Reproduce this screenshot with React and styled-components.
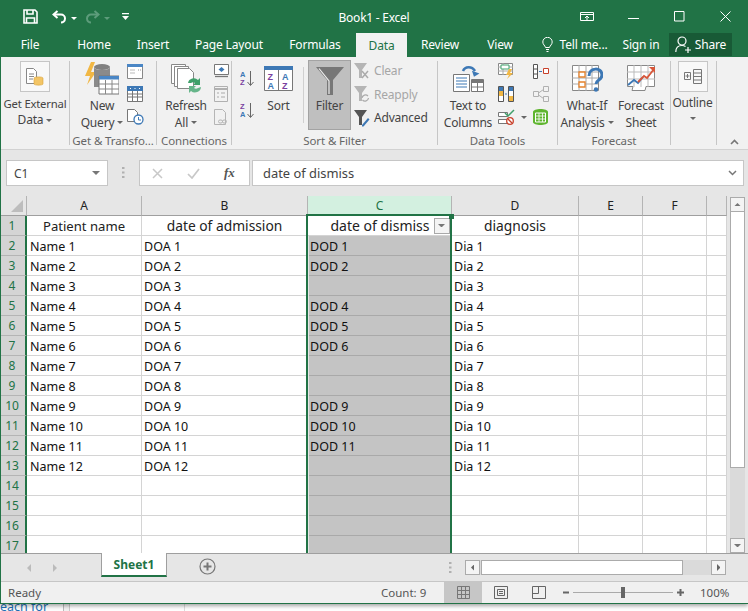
import React from 'react';
import styled, { createGlobalStyle } from 'styled-components';

const Global = createGlobalStyle`
  html, body { margin: 0; padding: 0; background: #fff; }
  #root { width: 748px; height: 611px; overflow: hidden; }
  * { box-sizing: border-box; }
`;
const UI = `"Noto Sans", "Open Sans", sans-serif`;
const GREEN = '#217346';

const Page = styled.div`display:flex;flex-direction:column;width:748px;height:611px;font-family:${UI};background:#fff;overflow:hidden;`;
const Win = styled.div`display:flex;flex-direction:column;height:604px;flex:none;border-left:1px solid ${GREEN};border-bottom:1px solid ${GREEN};box-shadow:0 2px 4px rgba(0,0,0,.35);position:relative;z-index:1;`;

const TitleBar = styled.div`height:33px;flex:none;background:${GREEN};display:grid;grid-template-columns:1fr auto 1fr;align-items:center;color:#fff;margin-left:-1px;`;
const Qat = styled.div`display:flex;align-items:center;padding:0 0 0 23px;height:27px;`;
const Title = styled.div`font-size:12px;letter-spacing:-.25px;padding-top:2px;color:#fff;`;
const WinCtl = styled.div`display:flex;justify-content:flex-end;align-items:center;height:27px;padding-right:17px;`;
const Slot = styled.span`display:block;flex:none;margin-left:${p=>p.$l||0}px;line-height:0;`;

const TabRow = styled.div`height:24px;flex:none;background:${GREEN};display:flex;margin-left:-1px;color:#fff;font-size:12px;`;
const Tab = styled.div`width:${p=>p.$w}px;margin-left:${p=>p.$l||0}px;display:flex;align-items:center;justify-content:center;gap:6px;
  background:${p=>p.$active?'#f1f1f1':'transparent'};color:${p=>p.$active?GREEN:'#fff'};padding-bottom:${p=>p.$active?0:1}px;flex:none;letter-spacing:-.15px;`;
const Share = styled(Tab)`background:#185a36;height:23px;gap:4px;`;

const Ribbon = styled.div`height:93px;flex:none;background:#f1f1f1;border-bottom:1px solid #d2d2d2;display:flex;color:#444;font-size:12px;position:relative;letter-spacing:-.2px;`;
const Group = styled.div`width:${p=>p.$w}px;flex:none;position:relative;display:flex;flex-direction:column;align-items:stretch;padding-top:3px;
  &::after{content:'';position:absolute;right:0;top:4px;bottom:4px;width:1px;background:#c6c6c6;}`;
const GroupBody = styled.div`height:74px;display:flex;align-items:flex-start;padding-left:${p=>p.$l||0}px;`;
const GroupLabel = styled.div`height:14px;line-height:14px;text-align:center;font-size:11.5px;color:#666;padding-right:1px;white-space:nowrap;letter-spacing:-.1px;`;
const BigBtn = styled.div`width:${p=>p.$w}px;margin-left:${p=>p.$l||0}px;flex:none;display:flex;flex-direction:column;align-items:center;`;
const BigIcon = styled.div`height:${p=>p.$h||37}px;display:flex;align-items:center;justify-content:center;line-height:0;`;
const BoxIcon = styled.div`width:30px;height:31px;margin-top:1px;background:#f8f8f8;border:1px solid #c6c6c6;display:flex;align-items:center;justify-content:center;line-height:0;margin-bottom:${p=>p.$b||0}px;`;
const Lbl = styled.div`height:${p=>p.$h||17}px;line-height:${p=>p.$h||17}px;white-space:nowrap;display:flex;align-items:center;gap:3px;font-size:${p=>p.$s||12}px;`;
const Caret = styled.span`display:inline-block;width:0;height:0;border-left:3px solid transparent;border-right:3px solid transparent;border-top:3px solid ${p=>p.$c||'#666'};`;
const SmallCol = styled.div`width:${p=>p.$w}px;margin-left:${p=>p.$l||0}px;padding-top:${p=>p.$t||3}px;flex:none;display:flex;flex-direction:column;gap:${p=>p.$g||7}px;align-items:flex-start;`;
const SmallRow = styled.div`display:flex;align-items:center;height:16px;line-height:0;gap:${p=>p.$g||0}px;`;
const VSep = styled.div`width:1px;height:56px;margin:7px 4px 0 ${p=>p.$l||0}px;background:#d0d0d0;flex:none;`;
const FilterBtn = styled.div`width:43px;height:70px;background:#bfbfbf;border:1px solid #a3a3a3;flex:none;display:flex;flex-direction:column;align-items:center;padding-top:3px;`;
const FilterList = styled.div`display:flex;flex-direction:column;padding:3px 0 0 3px;gap:7.5px;`;
const FilterItem = styled.div`height:16px;display:flex;align-items:center;gap:4px;color:${p=>p.$off?'#a6a6a6':'#444'};line-height:16px;white-space:nowrap;`;
const Collapse = styled.div`position:absolute;right:9px;bottom:4px;line-height:0;`;

const FormulaArea = styled.div`height:46px;flex:none;background:#e6e6e6;display:flex;align-items:flex-start;padding:10px 4px 0 5px;`;
const NameBox = styled.div`width:102px;height:26px;background:#fff;border:1px solid #c6c6c6;display:flex;align-items:center;justify-content:space-between;padding:0 7px;font-size:12px;color:#444;flex:none;`;
const Dots = styled.div`width:31px;display:flex;justify-content:center;line-height:0;padding-top:7px;flex:none;`;
const FnBox = styled.div`width:111px;height:26px;background:#fff;border:1px solid #c6c6c6;display:flex;align-items:center;padding-left:12px;gap:24px;flex:none;`;
const Fx = styled.span`font-family:"Liberation Serif",serif;font-style:italic;font-weight:700;font-size:13px;color:#555;`;
const Input = styled.div`width:492px;height:26px;margin-left:2px;background:#fff;border:1px solid #c6c6c6;display:flex;align-items:center;justify-content:space-between;padding:0 6px 0 10px;font-size:12.9px;color:#444;flex:none;`;

const SheetArea = styled.div`height:357px;flex:none;background:#e6e6e6;display:flex;`;
const SheetClip = styled.div`width:726px;flex:none;position:relative;overflow:hidden;`;
const Grid = styled.div`display:grid;grid-template-columns:26px 115px 166px 144px 127px 64px 64px 20px;grid-auto-rows:20px;`;
const ColHead = styled.div`background:${p=>p.$sel?'#d3f0e0':'#e6e6e6'};color:${p=>p.$sel?GREEN:'#222'};font-size:12px;display:flex;align-items:center;justify-content:center;border-bottom:1px solid ${p=>p.$sel?GREEN:'#9f9f9f'};border-right:1px solid #b4b4b4;`;
const Corner = styled.div`background:#e6e6e6;border-right:1px solid #b4b4b4;border-bottom:1px solid #9f9f9f;position:relative;
  &::after{content:'';position:absolute;right:3px;bottom:3px;width:0;height:0;border-left:12px solid transparent;border-bottom:12px solid #bdbdbd;}`;
const RowHead = styled.div`background:#d4d4d4;color:${GREEN};font-size:12px;display:flex;align-items:center;justify-content:center;border-bottom:1px solid #b4b4b4;border-right:2px solid ${GREEN};padding-right:2px;`;
const Cell = styled.div`background:#fff;border-right:1px solid #d4d4d4;border-bottom:1px solid #d4d4d4;font-size:12.5px;color:#111;display:flex;align-items:center;padding:1px 0 0 ${p=>p.$pad||3}px;white-space:nowrap;overflow:hidden;
  justify-content:${p=>p.$c?'center':'flex-start'};`;
const HeadCell = styled(Cell)`font-size:${p=>p.$big?13.8:13.1}px;padding:0;color:#222;`;
const SelCell = styled(Cell)`background:#c4c4c4;border-bottom-color:#a9a9a9;border-right-color:transparent;margin-left:1px;padding-left:1px;`;
const SelTop = styled(Cell)`justify-content:center;font-size:14px;color:#222;padding:0 0 0 21px;gap:4px;`;
const FilterDrop = styled.div`width:16px;height:16px;background:#f4f4f4;border:1px solid #a9a9a9;display:flex;align-items:center;justify-content:center;flex:none;`;
const Selection = styled.div`position:absolute;left:305px;top:18px;width:146px;height:340px;border:2px solid ${GREEN};border-bottom:none;pointer-events:none;`;
const Handle = styled.div`position:absolute;left:448px;top:18px;width:5px;height:5px;background:${GREEN};`;

const VScroll = styled.div`width:21px;flex:none;margin-left:3px;display:flex;flex-direction:column;padding-top:1px;`;
const ScrollBtn = styled.div`width:15px;height:15px;background:#f4f4f4;border:1px solid #ababab;display:flex;align-items:center;justify-content:center;flex:none;`;
const VTrackThumb = styled.div`width:15px;height:256px;background:#fff;border:1px solid #ababab;border-top:none;flex:none;`;
const VTrack = styled.div`width:15px;flex:1;background:#dadada;`;

const TabsBar = styled.div`height:28px;flex:none;background:#e6e6e6;border-top:1px solid #9f9f9f;display:flex;align-items:flex-start;position:relative;z-index:2;`;
const NavArrows = styled.div`width:100px;display:flex;padding:10px 0 0 26px;gap:22px;line-height:0;flex:none;`;
const SheetTab = styled.div`width:66px;height:24px;margin-top:-1px;background:#fff;border-left:1px solid #9f9f9f;border-right:1px solid #9f9f9f;border-bottom:2px solid ${GREEN};color:${GREEN};font-weight:700;font-size:12px;display:flex;align-items:center;justify-content:center;flex:none;`;
const AddBtn = styled.div`margin:4px 0 0 32px;line-height:0;flex:none;`;
const BarDots = styled.div`margin:8px 0 0 233px;line-height:0;flex:none;`;
const HScroll = styled.div`display:flex;margin:6px 0 0 13px;width:261px;height:15px;flex:none;background:#dadada;`;
const HThumb = styled.div`width:202px;margin-left:1px;background:#fff;border:1px solid #ababab;flex:none;`;
const HGap = styled.div`flex:1;`;

const Status = styled.div`height:22px;flex:none;background:#f0f0f0;border-top:1px solid #c6c6c6;display:flex;align-items:center;font-size:11.5px;color:#555;`;
const Ready = styled.div`margin-left:7px;width:373px;flex:none;`;
const Count = styled.div`width:63px;flex:none;`;
const ViewBtn = styled.div`width:${p=>p.$w}px;height:21px;background:${p=>p.$on?'#c6c6c6':'transparent'};display:flex;align-items:center;justify-content:center;line-height:0;flex:none;`;
const Zoom = styled.div`display:flex;align-items:center;margin-left:5px;line-height:0;flex:none;`;
const Pct = styled.div`margin-left:15px;flex:none;`;

const Behind = styled.div`flex:1;display:flex;overflow:hidden;background:#fff;color:#1f6fb5;font-size:12.5px;`;
const BehindA = styled.div`width:64px;background:#fdfdfd;border-right:1px solid #bbb;overflow:hidden;flex:none;`;
const BehindText = styled.div`margin:-4px 0 0 0;line-height:14px;white-space:nowrap;`;
const BehindB = styled.div`width:6px;background:#f2f2f2;border-right:1px solid #ccc;flex:none;`;
const BehindC = styled.div`width:115px;border-right:1px solid #ddd;flex:none;`;

const Save = () => <svg width="15" height="15" viewBox="0 0 15 15" fill="none" stroke="#fff" strokeWidth="1.6"><path d="M1 1h11l2 2v11H1z"/><path d="M4 1v4h6V1M3.500 14V9h8v5" /></svg>;
const Undo = ({c='#fff'}) => <svg width="15" height="14" viewBox="0 0 15 14" fill="none" stroke={c} strokeWidth="2"><path d="M5.500 1 1.500 4.500l4 3.500"/><path d="M2 4.500h7a4 4 0 0 1 4 4c0 2.500-2 4-4 4"/></svg>;
const Redo = ({c='#5d9c7b'}) => <svg width="15" height="14" viewBox="0 0 15 14" fill="none" stroke={c} strokeWidth="2"><path d="M9.500 1l4 3.500-4 3.500"/><path d="M13 4.500H6a4 4 0 0 0-4 4c0 2.500 2 4 4 4"/></svg>;
const Custom = () => <svg width="7" height="8" viewBox="0 0 7 8"><path d="M0 0h7v1.200H0z M0 3h7L3.500 7z" fill="#fff"/></svg>;
const RibbonDisp = () => <svg width="14" height="10" viewBox="0 0 14 10" fill="none" stroke="#fff"><path d="M.5.500h13v8H.500zM.5 2.500h13M7 8V4M5 6l2-2 2 2"/></svg>;
const Min = () => <svg width="11" height="2" viewBox="0 0 11 2"><path d="M0 .5h11" stroke="#fff"/></svg>;
const Max = () => <svg width="11" height="11" viewBox="0 0 11 11" fill="none" stroke="#fff"><path d="M.5.500h9.500v9.500H.500z"/></svg>;
const Close = () => <svg width="11" height="11" viewBox="0 0 11 11" stroke="#fff"><path d="M.5.500l10 10M10.500.500l-10 10"/></svg>;
const Bulb = () => <svg width="11" height="15" viewBox="0 0 11 15" fill="none" stroke="#fff"><path d="M3.500 10.500C3 8.500.8 7.500.8 5a4.700 4.700 0 0 1 9.400 0c0 2.500-2.200 3.500-2.700 5.500zM4 12.500h3M4.500 14.500h2"/></svg>;
const Person = () => <svg width="16" height="17" viewBox="0 0 16 17" fill="none" stroke="#fff" strokeWidth="1.2"><circle cx="7" cy="5" r="4"/><path d="M.8 16c0-4 2.500-6.500 6.200-6.500 1.500 0 2.500.3 3.500 1M10 14h6M13 11v6"/></svg>;

const ExtData = () => <svg width="18" height="19" viewBox="0 0 18 19"><path d="M.5 1.500h7l3 3v12H.5z" fill="#fff" stroke="#888"/><path d="M3 7h5M3 9.500h5M3 12h4" stroke="#888"/><path d="M8 11c0-1.500 9-1.500 9 0v6c0 1.500-9 1.500-9 0z" fill="#f3c566" stroke="#d8a23a" strokeWidth=".6"/></svg>;
const NewQuery = () => <svg width="34" height="33" viewBox="0 0 34 33"><path d="M6 0 0 14h5l-3 9 9-13H6l4-10z" fill="#f1b744"/><ellipse cx="17" cy="5" rx="8" ry="3" fill="#808080"/><path d="M9 5v20h16V5c0 4-16 4-16 0z" fill="#8a8a8a"/><path d="M14 14h20v18H14z" fill="#fff" stroke="#777"/><path d="M14 14h20v3.500H14z" fill="#4a86c5"/><path d="M14 22h20M14 27h20M20.500 18v14M27 18v14" stroke="#888"/></svg>;
const Sm1 = () => <svg width="16" height="15" viewBox="0 0 16 15"><path d="M.5.500h15v14H.500z" fill="#fff" stroke="#888"/><path d="M0 0h16v3H0z" fill="#4a86c5"/><path d="M3 6h5M3 9h5" stroke="#bbb"/><path d="M11 6h.9M13 6h.9" stroke="#888"/></svg>;
const Sm2 = () => <svg width="16" height="16" viewBox="0 0 16 16"><path d="M.5.500h15v15H.500z" fill="#fff" stroke="#777"/><path d="M0 0h16v5H0z" fill="#3d78b5"/><path d="M3 2.500h1M7.500 2.500h1M12 2.500h1" stroke="#fff"/><path d="M0 8h16M0 11h16M5.500 5v11M10.500 5v11" stroke="#777"/></svg>;
const Sm3 = () => <svg width="17" height="16" viewBox="0 0 17 16"><path d="M.5.500h7l3 3v9H.500z" fill="#fff" stroke="#777"/><circle cx="11.500" cy="10.500" r="4.500" fill="#fff" stroke="#3d78b5" strokeWidth="1.300"/><path d="M11.500 8v3h2.500" stroke="#3d78b5" fill="none"/></svg>;
const Refresh = () => <svg width="31" height="30" viewBox="0 0 31 30"><path d="M.5.500h14v19H.5z" fill="#fff" stroke="#888"/><path d="M3.500 2.500h14v20h-14z" fill="#fff" stroke="#888"/><path d="M6.500 4.500h12l4 4v16h-16z" fill="#fff" stroke="#888"/><path d="M17 19a6 6 0 0 1 10-3l2-2v7h-7l2-2a3.400 3.400 0 0 0-4 0z" fill="#3fa06a"/><path d="M30 23a6 6 0 0 1-10 4l-2 2v-7h7l-2 2a3.400 3.400 0 0 0 4 0z" fill="#66b58a"/></svg>;
const Conn1 = () => <svg width="15" height="14" viewBox="0 0 15 14"><path d="M.5.500h14v10H.500z" fill="#fff" stroke="#777"/><path d="M1 12.500h13" stroke="#777" strokeWidth="1.300"/><path d="M7.500 3l3 2.500-3 2.500-3-2.500z" fill="#3d78b5"/></svg>;
const Conn2 = () => <svg width="14" height="16" viewBox="0 0 14 16"><path d="M.5.500h13v15H.500z" fill="#f2f2f2" stroke="#b0b0b0"/><path d="M1 3h12" stroke="#b0b0b0" strokeWidth="2"/><path d="M3 7h2M7 7h4M3 11h2M7 11h4" stroke="#aaa"/></svg>;
const Conn3 = () => <svg width="14" height="16" viewBox="0 0 14 16" fill="none" stroke="#b5b5b5"><path d="M.5.500h8l3 3v12H.500z"/><rect x="4.500" y="11" width="4" height="3" rx="1.500"/><rect x="8.500" y="11" width="4" height="3" rx="1.500"/></svg>;
const T = ({x,y,c,s=7.500,w=700,children}) => <text x={x} y={y} fill={c} fontSize={s} fontWeight={w} fontFamily='"Liberation Sans",sans-serif'>{children}</text>;
const SortAZ = ({flip}) => <svg width="14" height="17" viewBox="0 0 14 17"><T x="0" y="7" c={flip?'#7a3fa0':'#3d78b5'}>{flip?'Z':'A'}</T><T x="0" y="15" c={flip?'#3d78b5':'#7a3fa0'}>{flip?'A':'Z'}</T><path d="M10.500 1v14M7.500 12l3 3.500 3-3.500" fill="none" stroke="#666"/></svg>;
const SortBig = () => <svg width="29" height="25" viewBox="0 0 29 25"><path d="M.5.500h28v24H.500z" fill="#fff" stroke="#777"/><path d="M0 0h29v4H0z" fill="#3d78b5"/><path d="M14.500 4v21" stroke="#777"/><T x="3.500" y="13.500" c="#7a3fa0" s={9}>Z</T><T x="3.500" y="23" c="#3d78b5" s={9}>A</T><T x="18" y="13.500" c="#3d78b5" s={9}>A</T><T x="18" y="23" c="#7a3fa0" s={9}>Z</T></svg>;
const Funnel = ({w=28,h=28,c='#777'}) => <svg width={w} height={h} viewBox="0 0 28 28"><path d="M0 0h28L17 13v15h-6V13z" fill={c}/><path d="M3 1.500l10 12.500v13" stroke="#eee" fill="none" strokeWidth="1.200"/></svg>;
const SmFunnel = ({c='#b5b5b5',mark}) => <svg width="16" height="17" viewBox="0 0 16 17"><path d="M0 0h13L8 7v8H5V7z" fill={c}/>{mark==='x'&&<path d="M8 8l6 7M14 8l-6 7" stroke="#aaa" strokeWidth="1.500"/>}{mark==='r'&&<path d="M8 12a3.500 3.500 0 0 1 6-2M14.500 12a3.500 3.500 0 0 1-6 2" stroke="#aaa" fill="none" strokeWidth="1.200"/>}{mark==='p'&&<path d="M8 15l6-7 1.500 1.500-6 7H8z" fill="#3d78b5"/>}</svg>;
const TextCol = () => <svg width="31" height="28" viewBox="0 0 31 28"><path d="M10 6c2-5 9-5 12 0" fill="none" stroke="#3d78b5" strokeWidth="2.500"/><path d="M18 7h8l-4 5z" fill="#3d78b5" transform="rotate(20 22 9)"/><path d="M.5 9.500h16v17H.500z" fill="#fff" stroke="#777"/><path d="M3 13h11M3 16h11M3 19h11M3 22h11" stroke="#3d78b5"/><path d="M18.500 14.500h12v12h-12z" fill="#fff" stroke="#777"/><path d="M18 15h13v3H18z" fill="#777"/><path d="M18 22h13M24.500 18v9" stroke="#777"/></svg>;
const Flash = () => <svg width="16" height="16" viewBox="0 0 16 16"><path d="M.5.500h14v11H.500z" fill="#fff" stroke="#888"/><path d="M0 4h15M0 8h15M5 0v12" stroke="#aaa"/><path d="M3 2h8v4H3z" fill="#fff" stroke="#3fa06a"/><path d="M11 6 8 12h3l-2 4 6-6h-3l2-4z" fill="#f1b744"/></svg>;
const RemDup = () => <svg width="16" height="16" viewBox="0 0 16 16"><path d="M.5.500h5v15h-5zM10.500.500h5v15h-5z" fill="#fff" stroke="#555"/><path d="M1 5h4v5H1z" fill="#f1b744"/><path d="M11 1h4v4h-4z" fill="#3d78b5"/><path d="M11 10h4v5h-4z" fill="#f1b744"/><path d="M1 1h4v4H1z" fill="#3d78b5"/><path d="M7 8h2" stroke="#3d78b5"/></svg>;
const Valid = () => <svg width="17" height="16" viewBox="0 0 17 16" fill="none"><path d="M.5 3.500h9v4h-9zM.5 10.500h9v4h-9z" fill="#fff" stroke="#777"/><path d="M7 4l3 3 6-6" stroke="#3fa06a" strokeWidth="1.500"/><circle cx="12" cy="12" r="3.300" fill="#fff" stroke="#c8402a" strokeWidth="1.300"/><path d="M10 10l4 4" stroke="#c8402a" strokeWidth="1.300"/></svg>;
const Consol = () => <svg width="16" height="15" viewBox="0 0 16 15"><path d="M.5.500h4v14h-4z" fill="#fff" stroke="#555"/><path d="M0 5h5M0 10h5" stroke="#555"/><path d="M10.500 4.500h5v5h-5z" fill="#fff" stroke="#c8402a"/><path d="M6 7.500h3" stroke="#3d78b5"/></svg>;
const Rel = () => <svg width="16" height="16" viewBox="0 0 16 16" fill="#f2f2f2" stroke="#b0b0b0"><path d="M.5 5.500h5v5h-5zM10.500.5h5v5h-5zM10.500 10.500h5v5h-5z"/><path d="M5.500 7l5-3.500M5.500 9l5 3.500" fill="none"/></svg>;
const Model = () => <svg width="15" height="16" viewBox="0 0 15 16"><path d="M0 3c0-4 15-4 15 0v10c0 4-15 4-15 0z" fill="#5fb52f"/><path d="M2.500 4h10v9h-10z" fill="none" stroke="#fff"/><path d="M2.500 7h10M2.500 10h10M6 4v9M9.500 4v9" stroke="#fff" strokeWidth=".8"/></svg>;
const WhatIf = () => <svg width="31" height="27" viewBox="0 0 31 27"><path d="M.5.500h26v25h-26z" fill="#fff" stroke="#888"/><path d="M0 7h26M0 13h26M0 19h26M7 0v26M14 0v26M20 0v26" stroke="#aaa"/><path d="M7 7h6v5H7zM7 17h6v5H7z" fill="#fff" stroke="#e5822c" strokeWidth="1.300"/><path d="M17 11c0-9 13-9 13-1 0 5-6 5-6 9" fill="none" stroke="#3d78b5" strokeWidth="3"/><circle cx="24" cy="24.500" r="2.200" fill="#3d78b5"/></svg>;
const Forecast = () => <svg width="29" height="28" viewBox="0 0 29 28"><path d="M.5.500h27v21H19l-1 4H5l1-4H.500z" fill="#fff" stroke="#888"/><path d="M0 7h28M0 14h28M7 0v22M14 0v22M21 0v22" stroke="#bbb"/><path d="M1 20l6-5 4 3 5-6" fill="none" stroke="#3d78b5" strokeWidth="1.800"/><path d="M11 17l6-6 3 2 7-9" fill="none" stroke="#d8573a" strokeWidth="1.800"/><path d="M22 2h6v6z" fill="#d8573a"/></svg>;
const Outline = () => <svg width="18" height="15" viewBox="0 0 18 15" fill="none" stroke="#777"><path d="M.5 3.500h6v7h-6zM3.500 5v4M1.500 7h4M9.500.5h8v14h-8zM9.500 4h8M9.500 7.500h8M9.500 11h8"/></svg>;
const Chevron = ({c='#777',w=1.500}) => <svg width="9" height="6" viewBox="0 0 9 6" fill="none" stroke={c} strokeWidth={w}><path d="M1 1l3.500 3.500L8 1"/></svg>;
const Up = () => <svg width="9" height="6" viewBox="0 0 9 6" fill="none" stroke="#777" strokeWidth="1.600"><path d="M1 5l3.500-3.500L8 5"/></svg>;
const Xmark = () => <svg width="11" height="11" viewBox="0 0 11 11" stroke="#c8c8c8" strokeWidth="1.500"><path d="M1 1l9 9M10 1l-9 9"/></svg>;
const Check = () => <svg width="13" height="11" viewBox="0 0 13 11" fill="none" stroke="#c8c8c8" strokeWidth="1.700"><path d="M1 6l4 4 7-9"/></svg>;
const VDots = ({c='#b0b0b0'}) => <svg width="3" height="11" viewBox="0 0 3 11" fill={c}><path d="M0 0h2.500v2H0zM0 4.500h2.500v2H0zM0 9h2.500v2H0z"/></svg>;
const Tri = ({d='down',c='#666',s=3.500}) => { const p = {down:`M0 0h${s*2}L${s} ${s}z`,up:`M0 ${s}h${s*2}L${s} 0z`,left:`M${s} 0v${s*2}L0 ${s}z`,right:`M0 0v${s*2}L${s} ${s}z`}[d]; const v=d==='down'||d==='up'; return <svg width={v?s*2:s} height={v?s:s*2} viewBox={`0 0 ${v?s*2:s} ${v?s:s*2}`}><path d={p} fill={c}/></svg>; };
const Plus = () => <svg width="17" height="17" viewBox="0 0 17 17" fill="none" stroke="#777"><circle cx="8.500" cy="8.500" r="7.500" strokeWidth="1.200"/><path d="M8.500 4.500v8M4.500 8.500h8" strokeWidth="2"/></svg>;
const VNormal = () => <svg width="13" height="13" viewBox="0 0 13 13" fill="none" stroke="#777"><path d="M.5.500h12v12H.500zM.5 4.500h12M.5 8.500h12M4.500.5v12M8.500.5v12"/></svg>;
const VPage = () => <svg width="14" height="13" viewBox="0 0 14 13" fill="none" stroke="#666"><path d="M.5.500h13v12H.500zM3.500 3.500h7v6h-7zM5 5.500h4M5 7.500h4"/></svg>;
const VBreak = () => <svg width="14" height="13" viewBox="0 0 14 13" fill="none" stroke="#666"><path d="M.5.500h13v12H.500zM.5 7.500h6v-7"/></svg>;
const ZoomSlider = () => <svg width="122" height="13" viewBox="0 0 122 13"><path d="M0 5.500h6v2H0zM114 5.500h7v2h-7zM116.500 3h2v7h-2z" fill="#666"/><path d="M10 6.500h100" stroke="#aaa"/><path d="M58 1h4v11h-4z" fill="#666"/></svg>;

const rows = Array.from({length:16},(_,i)=>{
  const n=i+1; const has=n<=12;
  return {rowNo:n+1,name:has?`Name ${n}`:'',doa:has?`DOA ${n}`:'',dod:[1,2,4,5,6,9,10,11].includes(n)?`DOD ${n}`:'',dia:has?`Dia ${n}`:''};
});

export default function App(){
  return <Page>
    <Global/>
    <Win>
      <TitleBar>
        <Qat>
          <Save/><Slot $l={14}><Undo/></Slot><Slot $l={4}><Caret $c="#fff"/></Slot>
          <Slot $l={8}><Redo/></Slot><Slot $l={4}><Caret $c="#5d9c7b"/></Slot><Slot $l={12}><Custom/></Slot>
        </Qat>
        <Title>Book1 - Excel</Title>
        <WinCtl>
          <RibbonDisp/><Slot $l={34}><Min/></Slot><Slot $l={35}><Max/></Slot><Slot $l={35}><Close/></Slot>
        </WinCtl>
      </TitleBar>
      <TabRow>
        <Tab $w={60}>File</Tab><Tab $w={68}>Home</Tab><Tab $w={50}>Insert</Tab><Tab $w={102}>Page Layout</Tab><Tab $w={70}>Formulas</Tab>
        <Tab $w={51} $l={6} $active>Data</Tab><Tab $w={66}>Review</Tab><Tab $w={54}>View</Tab>
        <Tab $w={82} $l={7}><Bulb/>Tell me...</Tab><Tab $w={50}>Sign in</Tab>
        <Share $w={63} $l={3}><Person/>Share</Share>
      </TabRow>
      <Ribbon>
        <Group $w={69}>
          <GroupBody>
            <BigBtn $w={68}><BoxIcon $b={4}><ExtData/></BoxIcon><Lbl $h={16} $s={11.3}>Get External</Lbl><Lbl $h={16}>Data<Caret/></Lbl></BigBtn>
          </GroupBody>
        </Group>
        <Group $w={87}>
          <GroupBody $l={14}>
            <BigBtn $w={36}><BigIcon><NewQuery/></BigIcon><Lbl>New</Lbl><Lbl>Query<Caret/></Lbl></BigBtn>
            <SmallCol $w={20} $l={7}><SmallRow><Sm1/></SmallRow><SmallRow><Sm2/></SmallRow><SmallRow><Sm3/></SmallRow></SmallCol>
          </GroupBody>
          <GroupLabel>Get &amp; Transfo...</GroupLabel>
        </Group>
        <Group $w={75}>
          <GroupBody $l={7}>
            <BigBtn $w={44}><BigIcon><Refresh/></BigIcon><Lbl>Refresh</Lbl><Lbl>All<Caret/></Lbl></BigBtn>
            <SmallCol $w={16} $l={6}><SmallRow><Conn1/></SmallRow><SmallRow><Conn2/></SmallRow><SmallRow><Conn3/></SmallRow></SmallCol>
          </GroupBody>
          <GroupLabel>Connections</GroupLabel>
        </Group>
        <Group $w={206}>
          <GroupBody $l={8}>
            <SmallCol $w={14} $t={10} $g={16}><SmallRow><SortAZ/></SmallRow><SmallRow><SortAZ flip/></SmallRow></SmallCol>
            <BigBtn $w={33} $l={8}><BigIcon><SortBig/></BigIcon><Lbl>Sort</Lbl></BigBtn>
            <VSep $l={8}/>
            <FilterBtn><BigIcon $h={33}><Funnel/></BigIcon><Lbl>Filter</Lbl></FilterBtn>
            <FilterList>
              <FilterItem $off><SmFunnel mark="x"/>Clear</FilterItem>
              <FilterItem $off><SmFunnel mark="r"/>Reapply</FilterItem>
              <FilterItem><SmFunnel c="#555" mark="p"/>Advanced</FilterItem>
            </FilterList>
          </GroupBody>
          <GroupLabel>Sort &amp; Filter</GroupLabel>
        </Group>
        <Group $w={120}>
          <GroupBody $l={5}>
            <BigBtn $w={50}><BigIcon><TextCol/></BigIcon><Lbl>Text to</Lbl><Lbl>Columns</Lbl></BigBtn>
            <SmallCol $w={34} $l={5}>
              <SmallRow><Flash/></SmallRow><SmallRow><RemDup/></SmallRow>
              <SmallRow $g={6}><Valid/><Caret/></SmallRow>
            </SmallCol>
            <SmallCol $w={16} $l={1}><SmallRow><Consol/></SmallRow><SmallRow><Rel/></SmallRow><SmallRow><Model/></SmallRow></SmallCol>
          </GroupBody>
          <GroupLabel>Data Tools</GroupLabel>
        </Group>
        <Group $w={113}>
          <GroupBody $l={4}>
            <BigBtn $w={50}><BigIcon><WhatIf/></BigIcon><Lbl>What-If</Lbl><Lbl>Analysis<Caret/></Lbl></BigBtn>
            <BigBtn $w={50} $l={4}><BigIcon><Forecast/></BigIcon><Lbl>Forecast</Lbl><Lbl>Sheet</Lbl></BigBtn>
          </GroupBody>
          <GroupLabel>Forecast</GroupLabel>
        </Group>
        <Group $w={46}>
          <GroupBody>
            <BigBtn $w={43}><BoxIcon><Outline/></BoxIcon><Lbl $h={21}>Outline</Lbl><Lbl $h={10}><Caret/></Lbl></BigBtn>
          </GroupBody>
        </Group>
        <Collapse><Up/></Collapse>
      </Ribbon>
      <FormulaArea>
        <NameBox>C1<Tri c="#777" s={4}/></NameBox>
        <Dots><VDots/></Dots>
        <FnBox><Xmark/><Check/><Fx>fx</Fx></FnBox>
        <Input>date of dismiss<Chevron/></Input>
      </FormulaArea>
      <SheetArea>
        <SheetClip>
          <Grid>
            <Corner/>
            <ColHead>A</ColHead><ColHead>B</ColHead><ColHead $sel>C</ColHead><ColHead>D</ColHead><ColHead>E</ColHead><ColHead>F</ColHead><ColHead/>
            <RowHead>1</RowHead>
            <HeadCell $c>Patient name</HeadCell><HeadCell $c $big>date of admission</HeadCell>
            <SelTop>date of dismiss<FilterDrop><Tri c="#777" s={3.500}/></FilterDrop></SelTop>
            <HeadCell $c $big>diagnosis</HeadCell><Cell/><Cell/><Cell/>
            {rows.map(r=><React.Fragment key={r.rowNo}>
              <RowHead>{r.rowNo}</RowHead>
              <Cell>{r.name}</Cell><Cell $pad={2}>{r.doa}</Cell>
              <SelCell>{r.dod}</SelCell>
              <Cell $pad={2}>{r.dia}</Cell><Cell/><Cell/><Cell/>
            </React.Fragment>)}
          </Grid>
          <Selection/><Handle/>
        </SheetClip>
        <VScroll>
          <ScrollBtn><Tri d="up" s={3.500} c="#777"/></ScrollBtn>
          <VTrackThumb/><VTrack/>
          <ScrollBtn><Tri s={3.500} c="#777"/></ScrollBtn>
        </VScroll>
      </SheetArea>
      <TabsBar>
        <NavArrows><Tri d="left" c="#bbb" s={4}/><Tri d="right" c="#bbb" s={4}/></NavArrows>
        <SheetTab>Sheet1</SheetTab>
        <AddBtn><Plus/></AddBtn>
        <BarDots><VDots/></BarDots>
        <HScroll>
          <ScrollBtn><Tri d="left" s={3.500} c="#666"/></ScrollBtn>
          <HThumb/><HGap/>
          <ScrollBtn><Tri d="right" s={3.500} c="#666"/></ScrollBtn>
        </HScroll>
      </TabsBar>
      <Status>
        <Ready>Ready</Ready>
        <Count>Count: 9</Count>
        <ViewBtn $w={38} $on><VNormal/></ViewBtn>
        <ViewBtn $w={38}><VPage/></ViewBtn>
        <ViewBtn $w={38}><VBreak/></ViewBtn>
        <Zoom><ZoomSlider/></Zoom>
        <Pct>100%</Pct>
      </Status>
    </Win>
    <Behind><BehindA><BehindText>each for</BehindText></BehindA><BehindB/><BehindC/></Behind>
  </Page>;
}
